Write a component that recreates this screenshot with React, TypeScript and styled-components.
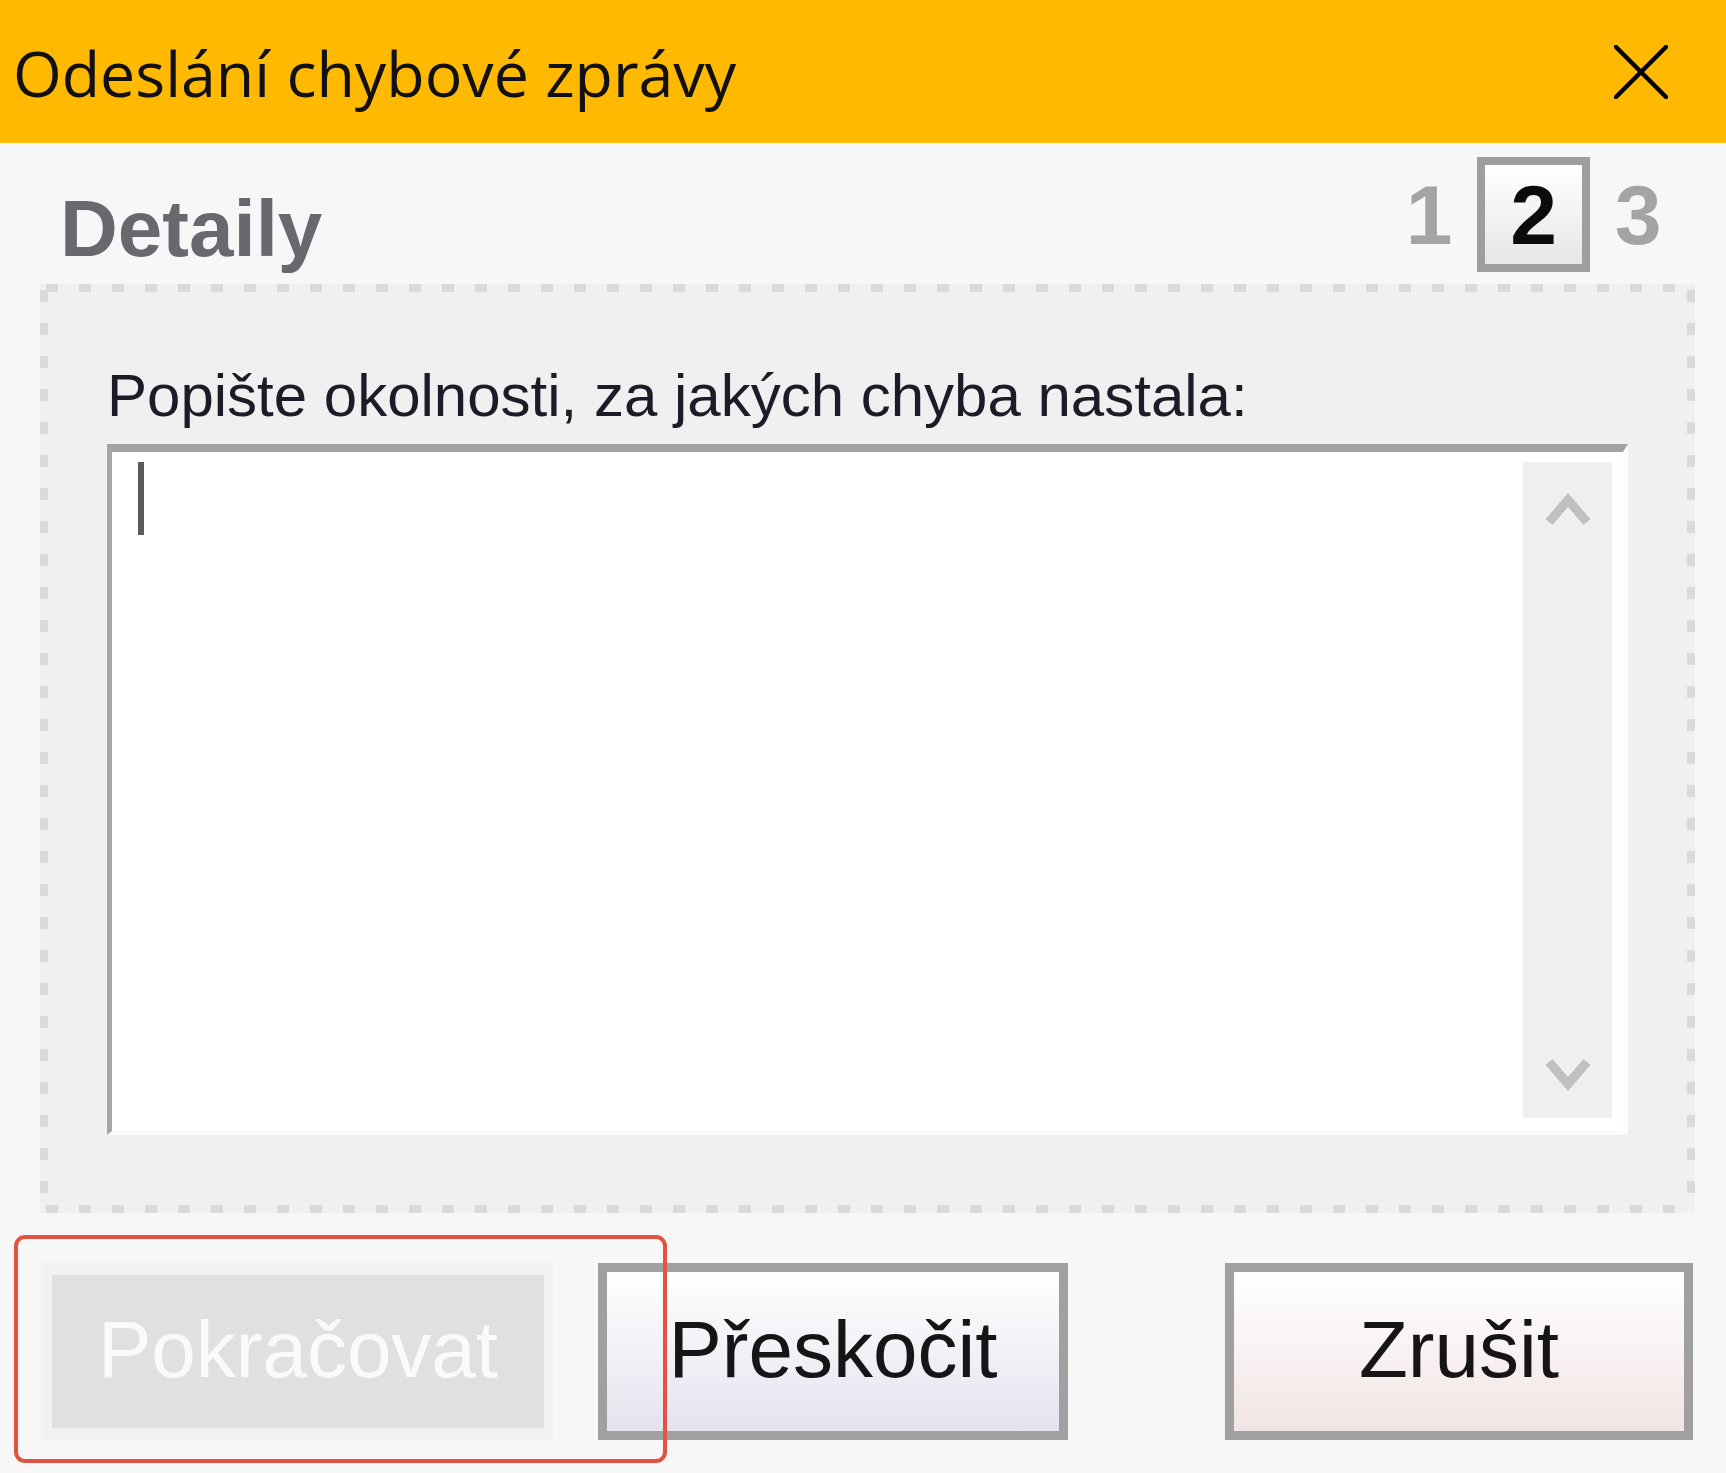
import { FC } from 'react';
import styled, { createGlobalStyle } from 'styled-components';

const GlobalStyle = createGlobalStyle`
    html, body {
        margin: 0;
        padding: 0;
        background: #f7f7f7;
    }
    body {
        font-family: 'Liberation Sans', Arial, sans-serif;
    }
`;

const Window = styled.div`
    width: 1726px;
    height: 1473px;
    display: flex;
    flex-direction: column;
    background: #f7f7f7;
    overflow: hidden;
`;

const TitleBar = styled.div`
    height: 143px;
    flex: none;
    display: flex;
    align-items: center;
    justify-content: space-between;
    padding: 0 58px 0 13px;
    background: #ffb900;
`;

const Title = styled.div`
    font-family: 'Open Sans', 'Noto Sans', sans-serif;
    font-size: 62.7px;
    line-height: 1;
    color: #111;
    padding-top: 4px;
`;

const CloseButton = styled.button`
    width: 54px;
    height: 54px;
    padding: 0;
    border: none;
    background: transparent;
    display: flex;
    align-items: center;
    justify-content: center;
`;

const Header = styled.div`
    height: 115px;
    margin: 14px 0 12px;
    padding: 0 58px 0 60px;
    display: flex;
    align-items: flex-start;
    justify-content: space-between;
`;

const SectionTitle = styled.div`
    margin-top: 32px;
    font-size: 80px;
    line-height: 1;
    font-weight: bold;
    color: #68686e;
`;

const Steps = styled.div`
    display: flex;
    align-items: stretch;
    gap: 18px;
    height: 115px;
`;

interface StepProps {
    $active?: boolean;
}

const Step = styled.div<StepProps>`
    box-sizing: border-box;
    width: ${({ $active }) => ($active ? '113px' : '60px')};
    height: 115px;
    padding-top: ${({ $active }) => ($active ? '8px' : '16px')};
    display: flex;
    justify-content: center;
    align-items: flex-start;
    font-size: 84px;
    line-height: 1;
    font-weight: bold;
    color: ${({ $active }) => ($active ? '#0c0c0c' : '#a4a4a4')};
    border: ${({ $active }) => ($active ? '8px solid #9e9e9e' : 'none')};
    background: ${({ $active }) =>
        $active ? 'linear-gradient(#ffffff, #e6e6e6)' : 'transparent'};
`;

const GroupBox = styled.div`
    flex: 1;
    margin: 0 31px 0 40px;
    padding: 82px 67px 78px;
    display: flex;
    flex-direction: column;
    background-color: #f0f0f0;
    background-image:
        repeating-linear-gradient(90deg, #dadada 0 12px, transparent 12px 33px),
        repeating-linear-gradient(90deg, #dadada 0 12px, transparent 12px 33px),
        repeating-linear-gradient(180deg, #dadada 0 12px, transparent 12px 33px),
        repeating-linear-gradient(180deg, #dadada 0 12px, transparent 12px 33px);
    background-size: 100% 8px, 100% 8px, 8px 100%, 8px 100%;
    background-position: 6px 0, 6px 100%, 0 6px, 100% 6px;
    background-repeat: no-repeat;
`;

const FieldLabel = styled.div`
    font-size: 60px;
    line-height: 1;
    color: #1c1c28;
`;

const TextField = styled.div`
    flex: 1;
    margin-top: 18px;
    display: flex;
    padding: 10px 11px 13px 0;
    background: #ffffff;
    border-top: 8px solid #a3a3a3;
    border-left: 5px solid #a6a6a6;
    border-right: 5px solid #fbfbfb;
    border-bottom: 4px solid #fbfbfb;
`;

const TextArea = styled.div`
    flex: 1;
    padding: 0 0 0 26px;
`;

const Caret = styled.div`
    width: 6px;
    height: 73px;
    background: #5a5a5a;
`;

const ScrollTrack = styled.div`
    width: 89px;
    padding: 30px 0 26px;
    display: flex;
    flex-direction: column;
    align-items: center;
    justify-content: space-between;
    background: #efefef;
`;

const Footer = styled.div`
    position: relative;
    margin-top: 50px;
    padding: 0 33px 33px 41px;
    display: flex;
    flex: none;
`;

interface ButtonProps {
    $tint: 'blue' | 'red';
}

const Button = styled.button<ButtonProps>`
    height: 177px;
    width: 470px;
    padding: 0 0 4px;
    border: 9px solid #a0a0a0;
    font-family: 'Liberation Sans', Arial, sans-serif;
    font-size: 80px;
    line-height: 1;
    color: #151515;
    background: ${({ $tint }) =>
        $tint === 'blue'
            ? 'linear-gradient(#ffffff, #e3e3ef)'
            : 'linear-gradient(#ffffff, #f2e4e4)'};
`;

const SkipButton = styled(Button)`
    margin-left: 45px;
`;

const CancelButton = styled(Button)`
    margin-left: auto;
    width: 468px;
`;

const DisabledFrame = styled.div`
    width: 512px;
    height: 177px;
    box-sizing: border-box;
    padding: 12px 9px 12px 11px;
    background: #f2f2f2;
`;

const DisabledButton = styled.button`
    width: 100%;
    height: 100%;
    padding: 0 0 4px;
    border: none;
    font-family: 'Liberation Sans', Arial, sans-serif;
    font-size: 80px;
    line-height: 1;
    color: #fafafa;
    background: #e0e0e0;
`;

const Highlight = styled.div`
    position: absolute;
    left: 14px;
    top: -28px;
    width: 653px;
    height: 228px;
    box-sizing: border-box;
    border: 4px solid #e2533f;
    border-radius: 11px;
    pointer-events: none;
`;

const Chevron: FC<{ dir: 'up' | 'down' }> = ({ dir }) => (
    <svg width='46' height='34' viewBox='0 0 46 34'>
        <polyline
            points={dir === 'up' ? '4,30 23,8 42,30' : '4,4 23,26 42,4'}
            fill='none'
            stroke='#c0c0c0'
            strokeWidth='9'
        />
    </svg>
);

export default function App() {
    return (
        <>
            <GlobalStyle />
            <Window>
                <TitleBar>
                    <Title>Odeslání chybové zprávy</Title>
                    <CloseButton aria-label='Zavřít'>
                        <svg width='54' height='54' viewBox='0 0 54 54'>
                            <path
                                d='M2 2 L52 52 M52 2 L2 52'
                                stroke='#000'
                                strokeWidth='4.5'
                                strokeLinecap='round'
                            />
                        </svg>
                    </CloseButton>
                </TitleBar>

                <Header>
                    <SectionTitle>Detaily</SectionTitle>
                    <Steps>
                        <Step>1</Step>
                        <Step $active>2</Step>
                        <Step>3</Step>
                    </Steps>
                </Header>

                <GroupBox>
                    <FieldLabel>Popište okolnosti, za jakých chyba nastala:</FieldLabel>
                    <TextField>
                        <TextArea>
                            <Caret />
                        </TextArea>
                        <ScrollTrack>
                            <Chevron dir='up' />
                            <Chevron dir='down' />
                        </ScrollTrack>
                    </TextField>
                </GroupBox>

                <Footer>
                    <DisabledFrame>
                        <DisabledButton disabled>Pokračovat</DisabledButton>
                    </DisabledFrame>
                    <SkipButton $tint='blue'>Přeskočit</SkipButton>
                    <CancelButton $tint='red'>Zrušit</CancelButton>
                    <Highlight />
                </Footer>
            </Window>
        </>
    );
}
